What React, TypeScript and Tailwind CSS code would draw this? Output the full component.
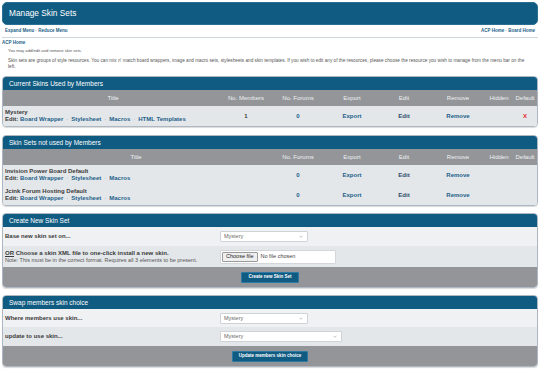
const font = { fontFamily: '"Liberation Sans", Arial, sans-serif' };

const cols = 'grid grid-cols-[220px_46px_58px_50px_54px_54px_28px_1fr]';

function Sep() {
    return <span className="text-[#8a8f94] font-normal mx-[3px]">·</span>;
}

function SectionHead({ title }: { title: string }) {
    return (
        <div className="h-[13px] bg-[#0f5b82] text-white text-[6.5px] flex items-center pl-[6px]">
            {title}
        </div>
    );
}

function ColHeads({ members }: { members: boolean }) {
    return (
        <div className={`${cols} h-[16px] bg-[#939598] text-[#eef1f4] text-[6px] items-center text-center`}>
            <div className={members ? '' : 'col-span-2'}>Title</div>
            {members && <div>No. Members</div>}
            <div>No. Forums</div>
            <div>Export</div>
            <div>Edit</div>
            <div>Remove</div>
            <div>Hidden</div>
            <div>Default</div>
        </div>
    );
}

function SkinRow({ name, members, html, isDefault }: { name: string, members?: string, html?: boolean, isDefault?: boolean }) {
    return (
        <div className={`${cols} h-[20px] bg-[#e4e7ea] text-[6px] font-bold items-center text-center text-[#1d5f89]`}>
            <div className={`${members ? '' : 'col-span-2'} text-left pl-[2px] leading-[7.5px]`}>
                <div className="text-[#3a3a3a]">{name}</div>
                <div>
                    <span className="text-[#3a3a3a]">Edit: </span>Board Wrapper<Sep />Stylesheet<Sep />Macros
                    {html && <><Sep />HTML Templates</>}
                </div>
            </div>
            {members && <div className="text-[#3a3a3a]">{members}</div>}
            <div>0</div>
            <div>Export</div>
            <div className="text-[#2a4a66]">Edit</div>
            <div>Remove</div>
            <div></div>
            <div className="text-[#e8262b]">{isDefault ? 'X' : ''}</div>
        </div>
    );
}

function Select({ w }: { w: string }) {
    return (
        <div className={`${w} h-[11px] bg-white border border-[#cfd3d7] rounded-[1px] flex items-center justify-between px-[3px] text-[5.5px] text-[#666]`}>
            <span>Mystery</span>
            <svg width="4" height="3" viewBox="0 0 8 5" className="mr-[1px]">
                <path d="M1 1l3 3 3-3" fill="none" stroke="#888" strokeWidth="1" />
            </svg>
        </div>
    );
}

function Button({ label }: { label: string }) {
    return (
        <div className="h-[11px] px-[6px] bg-[#0f5b82] border border-[#2c7aa3] rounded-[1px] text-white text-[4.5px] font-bold flex items-center">
            {label}
        </div>
    );
}

function Box({ children, className = '' }: { children: React.ReactNode, className?: string }) {
    return (
        <div className={`mx-[2px] border border-[#aeb8c2] rounded-[4px] overflow-hidden shadow-[0_1px_1px_rgba(0,0,0,0.15)] ${className}`}>
            {children}
        </div>
    );
}

export default function App() {
    return (
        <div className="w-[540px] h-[374px] bg-white overflow-hidden pt-[2px]" style={font}>
            <div className="mx-[2px] h-[23px] bg-[#0f5b82] rounded-[5px] border border-[#2a6f93] flex items-center pl-[6px] text-white text-[8.3px]">
                Manage Skin Sets
            </div>

            <div className="mx-[2px] h-[13px] border-b border-[#cdd7de] flex items-center justify-between px-[3px] text-[4.5px] font-bold text-[#1d5f89]">
                <div>Expand Menu <span className="text-[#999]">·</span> Reduce Menu</div>
                <div>ACP Home <span className="text-[#999]">·</span> Board Home</div>
            </div>

            <div className="pl-[2px] pt-[2px] leading-[6px] text-[4.5px] font-bold text-[#1d5f89]">ACP Home</div>
            <div className="pl-[8px] pr-[10px] mt-[2px] leading-[6px] text-[4.7px] text-[#555]">
                <div className="text-[4.2px]">You may add/edit and remove skin sets.</div>
                <div className="mt-[4px]">
                    Skin sets are groups of style resources. You can mix n' match board wrappers, image and macro sets, stylesheets and skin templates. If you wish to edit any of the resources, please choose the resource you wish to manage from the menu bar on the left.
                </div>
            </div>

            <Box className="mt-[6px]">
                <SectionHead title="Current Skins Used by Members" />
                <ColHeads members />
                <SkinRow name="Mystery" members="1" html isDefault />
            </Box>

            <Box className="mt-[8px]">
                <SectionHead title="Skin Sets not used by Members" />
                <ColHeads members={false} />
                <SkinRow name="Invision Power Board Default" />
                <SkinRow name="Jcink Forum Hosting Default" />
            </Box>

            <Box className="mt-[7px]">
                <SectionHead title="Create New Skin Set" />
                <div className="h-[19px] bg-[#f0f1f3] flex items-center text-[6px] text-[#3a3a3a]">
                    <div className="w-[217px] pl-[2px] font-bold">Base new skin set on...</div>
                    <Select w="w-[88px]" />
                </div>
                <div className="h-[21px] bg-[#e4e7ea] flex items-center text-[#3a3a3a]">
                    <div className="w-[217px] pl-[2px] leading-[6.5px]">
                        <div className="text-[6px] font-bold"><span className="underline">OR</span> Choose a skin XML file to one-click install a new skin.</div>
                        <div className="text-[5.5px] text-[#555]">Note: This must be in the correct format. Requires all 3 elements to be present.</div>
                    </div>
                    <div className="w-[116px] h-[14px] bg-white border border-[#d3d6da] rounded-[1px] flex items-center px-[1px] text-[5.5px] text-[#444]">
                        <span className="h-[10px] px-[3px] bg-[#efefef] border border-[#9a9a9a] rounded-[1px] flex items-center text-[#222]">Choose file</span>
                        <span className="ml-[3px]">No file chosen</span>
                    </div>
                </div>
                <div className="h-[20px] bg-[#939598] flex items-center justify-center">
                    <Button label="Create new Skin Set" />
                </div>
            </Box>

            <Box className="mt-[7px]">
                <SectionHead title="Swap members skin choice" />
                <div className="h-[18px] bg-[#f0f1f3] flex items-center text-[6px] text-[#3a3a3a]">
                    <div className="w-[217px] pl-[2px] font-bold">Where members use skin...</div>
                    <Select w="w-[88px]" />
                </div>
                <div className="h-[19px] bg-[#e4e7ea] flex items-center text-[6px] text-[#3a3a3a]">
                    <div className="w-[217px] pl-[2px] font-bold">update to use skin...</div>
                    <Select w="w-[122px]" />
                </div>
                <div className="h-[20px] bg-[#939598] flex items-center justify-center">
                    <Button label="Update members skin choice" />
                </div>
            </Box>
        </div>
    );
}
